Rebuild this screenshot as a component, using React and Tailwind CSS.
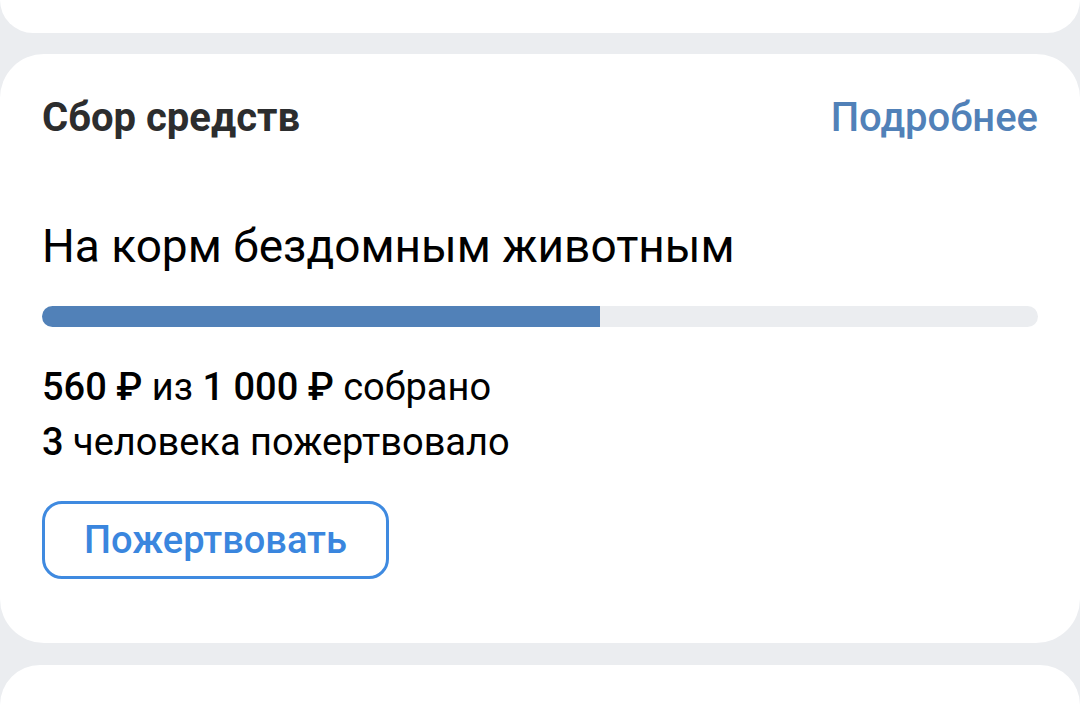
export default function App() {
  const raised = 560;
  const goal = 1000;
  const percent = (raised / goal) * 100;

  return (
    <div
      className="flex h-[705px] w-[1080px] flex-col overflow-hidden bg-[#ebedf0]"
      style={{ fontFamily: "Roboto, 'Noto Sans', sans-serif" }}
    >
      <div className="h-[33px] shrink-0 rounded-b-[44px] bg-white" />

      <section className="mt-[21px] h-[589px] shrink-0 rounded-[44px] bg-white px-[42px] pt-[40px]">
        <div className="flex items-center justify-between">
          <h2 className="text-[40px] font-bold leading-[48px] text-[#2c2d2e]">
            Сбор средств
          </h2>
          <a className="text-[40px] font-medium leading-[48px] text-[#5181b8]">
            Подробнее
          </a>
        </div>

        <p className="mt-[77px] text-[46px] leading-[54px] text-black">
          На корм бездомным животным
        </p>

        <div className="mt-[33px] h-[21px] w-full overflow-hidden rounded-full bg-[#ebedf0]">
          <div className="h-full bg-[#5181b8]" style={{ width: `${percent}%` }} />
        </div>

        <p className="mt-[38px] text-[38px] leading-[44px] text-black">
          <span className="font-medium">560 ₽</span> из{" "}
          <span className="font-medium">1 000 ₽</span> собрано
        </p>
        <p className="mt-[11px] text-[38px] leading-[44px] text-black">
          <span className="font-medium">3</span> человека пожертвовало
        </p>

        <button
          type="button"
          className="mt-[37px] h-[78px] rounded-[20px] border-[3px] border-[#3f8ae0] px-[39px] text-[38px] font-medium text-[#3a86de]"
        >
          Пожертвовать
        </button>
      </section>

      <div className="mt-[22px] flex-1 rounded-t-[44px] bg-white" />
    </div>
  );
}
